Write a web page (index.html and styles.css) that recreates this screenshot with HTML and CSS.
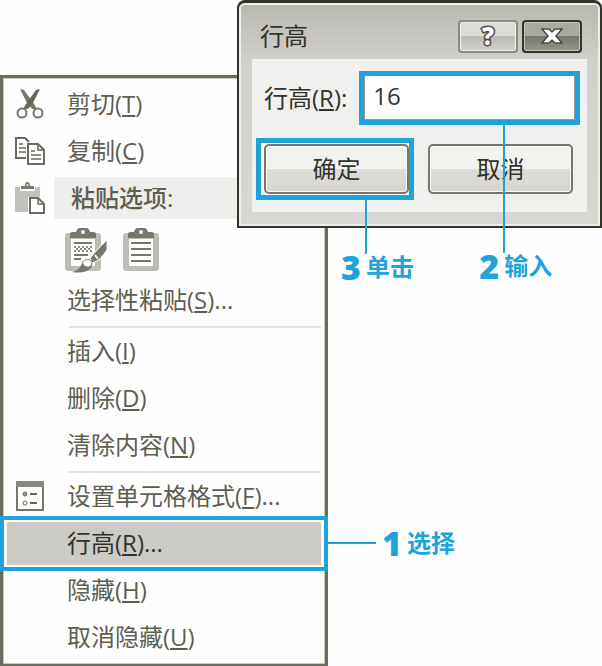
FILE: index.html
```html
<!DOCTYPE html>
<html lang="zh-CN">
<head>
  <meta charset="UTF-8">
  <meta name="viewport" content="width=device-width, initial-scale=1.0">
  <title>行高</title>
  <link rel="stylesheet" href="styles.css">
</head>
<body>
  <div class="stage">
    <!-- Context menu -->
    <div class="menu">
      <button class="menu-item">
        <span class="menu-icon">
          <svg width="30" height="32" viewBox="0 0 30 32">
            <path d="M5 1 L9 2 L19 16 L22 21 L17 21 L12 15 Z" fill="#77776b"/>
            <path d="M25 1 L21 2 L11 16 L8 21 L13 21 L18 15 Z" fill="#66665a"/>
            <circle cx="7" cy="25" r="4.5" fill="none" stroke="#77776b" stroke-width="2"/>
            <circle cx="23" cy="25" r="4.5" fill="none" stroke="#77776b" stroke-width="2"/>
          </svg>
        </span>
        <span>剪切(<u>T</u>)</span>
      </button>
      <button class="menu-item">
        <span class="menu-icon">
          <svg width="32" height="30" viewBox="0 0 32 30" fill="none" stroke="#6b6b5f" stroke-width="2">
            <path d="M12 22 H2 V2 H11 L15 6"/>
            <path d="M5 8 H9 M5 12 H12 M5 16 H12" stroke-width="1.5"/>
            <path d="M14 8 H24 L30 14 V28 H14 Z" fill="#fff"/>
            <path d="M24 8 V14 H30 M17 15 H21 M17 19 H27 M17 23 H27" stroke-width="1.5"/>
          </svg>
        </span>
        <span>复制(<u>C</u>)</span>
      </button>
      <div class="menu-heading">
        <span class="menu-icon">
          <svg width="30" height="34" viewBox="0 0 30 34">
            <path d="M0 6 H5 V10 H20 V6 H25 V16 H13 V31 H0 Z" fill="#c2c2bc"/>
            <path d="M6 8 V5 H10 Q10 1 12.5 1 Q15 1 15 5 H19 V8 Z" fill="#77776b"/>
            <circle cx="12.5" cy="4" r="1" fill="#fff"/>
            <path d="M15 17 H23 L29 23 V32 H15 Z" fill="#fff" stroke="#6b6b5f" stroke-width="2"/>
            <path d="M23 17 V23 H29" fill="none" stroke="#6b6b5f" stroke-width="1.5"/>
          </svg>
        </span>
        <span class="menu-heading-text">粘贴选项:</span>
      </div>
      <div class="paste-options">
        <button class="paste-option" aria-label="粘贴格式">
          <svg width="42" height="46" viewBox="0 0 42 46">
            <rect x="0" y="6" width="36" height="38" rx="3" fill="#bdbdb6"/>
            <path d="M6 12 H30 V39 H6 Z" fill="#fff"/>
            <path d="M5 11 V7 Q5 5 8 5 H11 Q12 1 15 1 H21 Q24 1 25 5 H28 Q31 5 31 7 V11 Z" fill="#77776b"/>
            <circle cx="18" cy="5" r="2" fill="#fff"/>
            <path d="M9 16 H27 M9 28 H23 M9 32 H16" stroke="#77776b" stroke-width="2"/>
            <path d="M9 20 H27 M11 22 H27 M9 24 H27" stroke="#66665a" stroke-width="1.5" stroke-dasharray="2 2"/>
            <path d="M42 13 V23 L34 33 L27 36 L25 31 L31 24 Z" fill="#77776b" stroke="#fff"/>
            <path d="M30 28 L33 32" stroke="#fff" stroke-width="2"/>
            <path d="M7 45 Q15 43 17 36 Q20 31 25 33 Q29 36 26 41 Q20 47 7 45 Z" fill="#77776b"/>
            <path d="M17 36 Q20 31 25 33 Q29 37 24 40 Q20 41 17 36 Z" fill="#fff" stroke="#8d8d83"/>
          </svg>
        </button>
        <button class="paste-option" aria-label="粘贴值">
          <svg width="36" height="46" viewBox="0 0 36 46">
            <rect x="0" y="6" width="36" height="38" rx="3" fill="#bdbdb6"/>
            <path d="M6 12 H30 V39 H6 Z" fill="#fff"/>
            <path d="M5 11 V7 Q5 5 8 5 H11 Q12 1 15 1 H21 Q24 1 25 5 H28 Q31 5 31 7 V11 Z" fill="#77776b"/>
            <circle cx="18" cy="5" r="2" fill="#fff"/>
            <path d="M8 16 H28 M8 22 H28 M8 28 H28 M8 34 H28" stroke="#77776b" stroke-width="2"/>
          </svg>
        </button>
      </div>
      <button class="menu-item"><span class="menu-icon"></span><span>选择性粘贴(<u>S</u>)...</span></button>
      <div class="separator"></div>
      <button class="menu-item"><span class="menu-icon"></span><span>插入(<u>I</u>)</span></button>
      <button class="menu-item"><span class="menu-icon"></span><span>删除(<u>D</u>)</span></button>
      <button class="menu-item"><span class="menu-icon"></span><span>清除内容(<u>N</u>)</span></button>
      <div class="separator"></div>
      <button class="menu-item">
        <span class="menu-icon">
          <svg width="28" height="30" viewBox="0 0 28 30">
            <rect x="1" y="1" width="26" height="28" fill="#fff" stroke="#77776b" stroke-width="2"/>
            <path d="M0 0 H28 V6 H0 Z" fill="#88887e"/>
            <circle cx="9" cy="13" r="2" fill="#99998f" stroke="#66665a"/>
            <circle cx="9" cy="22" r="2" fill="#fff" stroke="#66665a"/>
            <path d="M14 13 H21 M14 22 H21" stroke="#66665a" stroke-width="2"/>
          </svg>
        </span>
        <span>设置单元格格式(<u>F</u>)...</span>
      </button>
      <div class="selected-row">
        <button class="menu-item selected"><span class="menu-icon"></span><span>行高(<u>R</u>)...</span></button>
        <div class="callout callout-side">
          <span class="callout-line"></span>
          <span class="callout-label"><b class="callout-number">1</b>选择</span>
        </div>
      </div>
      <button class="menu-item"><span class="menu-icon"></span><span>隐藏(<u>H</u>)</span></button>
      <button class="menu-item"><span class="menu-icon"></span><span>取消隐藏(<u>U</u>)</span></button>
    </div>

    <!-- Row height dialog -->
    <div class="dialog">
      <div class="title-bar">
        <span class="title">行高</span>
        <button class="caption-btn help">?</button>
        <button class="caption-btn close" aria-label="关闭">
          <svg width="22" height="18" viewBox="0 0 22 18">
            <path d="M1 2 H8 L11 5 L14 2 H21 L15 9 L21 16 H14 L11 13 L8 16 H1 L7 9 Z" fill="#fff" stroke="#4c4c40" stroke-width="1.5"/>
          </svg>
        </button>
      </div>
      <div class="dialog-body">
        <div class="field-row">
          <label for="rowHeight">行高(<u>R</u>):</label>
          <div class="mark field-mark">
            <input type="text" id="rowHeight" value="16">
            <div class="callout callout-down long">
              <span class="callout-line"></span>
              <span class="callout-label"><b class="callout-number">2</b>输入</span>
            </div>
          </div>
        </div>
        <div class="button-row">
          <div class="mark ok-mark">
            <button class="dialog-btn">确定</button>
            <div class="callout callout-down">
              <span class="callout-line"></span>
              <span class="callout-label"><b class="callout-number">3</b>单击</span>
            </div>
          </div>
          <button class="dialog-btn">取消</button>
        </div>
      </div>
    </div>
  </div>
</body>
</html>
```

FILE: styles.css
```css
* {
  box-sizing: border-box;
}

body {
  margin: 0;
  background-color: #fefefe;
  font-family: "Open Sans", "Noto Sans CJK SC", sans-serif;
  font-size: 24px;
  line-height: 32px;
  color: #5e5e52;
}

button,
input {
  font: inherit;
  color: inherit;
}

svg {
  display: block;
}

u {
  text-decoration-thickness: 2px;
  text-underline-offset: 2px;
}

.stage {
  position: relative;
  padding-top: 75px;
}

/* Context menu */
.menu {
  width: 328px;
  padding: 3px 0;
  border: 3px solid #6b6b5f;
  border-bottom-width: 2px;
  background-color: #fefefe;
  box-shadow: inset 0 0 0 1px #c9c9c2;
}

.menu-item {
  display: flex;
  align-items: center;
  width: 100%;
  height: 47px;
  padding: 0 0 2px;
  border: none;
  background: none;
  text-align: left;
  white-space: nowrap;
}

.menu-icon {
  display: flex;
  justify-content: center;
  flex: none;
  width: 54px;
  margin-right: 10px;
}

.menu-heading {
  display: flex;
  align-items: center;
  height: 47px;
  padding-bottom: 2px;
}

.menu-heading .menu-icon {
  margin-right: -3px;
}

.menu-heading-text {
  flex: 1;
  padding: 5px 0 5px 17px;
  background-color: #eeeeec;
  font-weight: 500;
}

.paste-options {
  display: flex;
  align-items: center;
  gap: 16px;
  height: 55px;
  padding-left: 62px;
}

.paste-option {
  padding: 0;
  border: none;
  background: none;
}

.separator {
  height: 4px;
  margin: 0 4px 0 66px;
  padding-top: 1px;
  border-bottom: 2px solid #e2e2e0;
}

.selected-row {
  position: relative;
  margin: 0 4px;
  background-color: #cbcac5;
}

/* Blue frame drawn round the selected row */
.selected-row::before {
  content: "";
  position: absolute;
  inset: -4px -7px;
  border: 4px solid #1fa3da;
  box-shadow: inset 0 0 0 2px #fefefe;
}

.selected {
  color: #33332a;
}

.selected .menu-icon {
  width: 50px;
}

/* Dialog */
.dialog {
  position: absolute;
  top: 0;
  right: 0;
  width: 365px;
  padding: 6px 13px 14px;
  border: 2px solid #33332a;
  border-top-width: 3px;
  border-radius: 8px 8px 0 0;
  background: linear-gradient(#b7b6af, #d2d1cb 60px, #d8d7d2);
  box-shadow: inset 0 0 0 2px #eeeeea;
  color: #33332a;
}

.title-bar {
  display: flex;
  align-items: center;
  gap: 4px;
  height: 50px;
  padding: 4px 5px 0 8px;
}

.title {
  flex: 1;
}

.caption-btn {
  display: flex;
  justify-content: center;
  align-items: center;
  width: 60px;
  height: 33px;
  padding: 0;
  border: 2px solid #8b8b82;
  border-radius: 4px;
}

.help {
  background: linear-gradient(#dddcd7 50%, #bdbcb5 50%, #d2d1cb);
  box-shadow: inset 0 0 0 1px #eeeeea;
  color: #fff;
  font-weight: 800;
  -webkit-text-stroke: 3px #4c4c40;
  paint-order: stroke fill;
}

.close {
  border-color: #33332a;
  background: linear-gradient(#aaa99f 50%, #77766a 50%, #96958a);
  box-shadow: inset 0 0 0 1px #c5c4bc;
}

.dialog-body {
  padding: 12px 7px 12px 4px;
  background-color: #f0f0ee;
}

.field-row {
  display: flex;
  align-items: center;
  gap: 12px;
  padding-left: 8px;
}

.field-row label {
  white-space: nowrap;
}

.mark {
  position: relative;
  border: 5px solid #1fa3da;
  background-color: #fefefe;
}

.field-mark {
  flex: 1;
  min-width: 0;
}

.field-mark input {
  display: block;
  width: 100%;
  height: 44px;
  padding: 0 8px 4px;
  border: 1px solid #99998f;
  border-width: 0 1px 1px;
  background-color: #fff;
  outline: none;
}

.button-row {
  display: flex;
  align-items: center;
  justify-content: space-between;
  gap: 14px;
  padding: 13px 7px 0 0;
}

.ok-mark {
  padding: 1px 0 1px 3px;
}

.dialog-btn {
  display: block;
  width: 145px;
  height: 50px;
  padding: 0;
  border: 2px solid #77776b;
  border-radius: 5px;
  background: linear-gradient(#f2f2f0 50%, #deddd9 50%, #d6d5d0);
  box-shadow: inset 0 0 0 1px #f8f8f6;
}

/* Numbered steps */
.callout {
  position: absolute;
  z-index: 1;
  display: flex;
  color: #1fa3da;
  white-space: nowrap;
  pointer-events: none;
}

.callout-line {
  flex: none;
  background-color: #1fa3da;
}

.callout-label {
  display: flex;
  align-items: center;
  gap: 5px;
  font-weight: 700;
  line-height: 26px;
}

.callout-number {
  font-size: 34px;
  font-weight: 800;
}

.callout-side {
  top: 10px;
  left: 100%;
  align-items: center;
  gap: 6px;
  padding-left: 7px;
}

.callout-side .callout-line {
  width: 48px;
  height: 2px;
}

.callout-down {
  top: 100%;
  left: 80px;
  flex-direction: column;
  padding-top: 5px;
}

.callout-down .callout-line {
  width: 2px;
  height: 54px;
  margin-left: 24px;
}

.long {
  left: 115px;
}

.long .callout-line {
  height: 128px;
}
```
